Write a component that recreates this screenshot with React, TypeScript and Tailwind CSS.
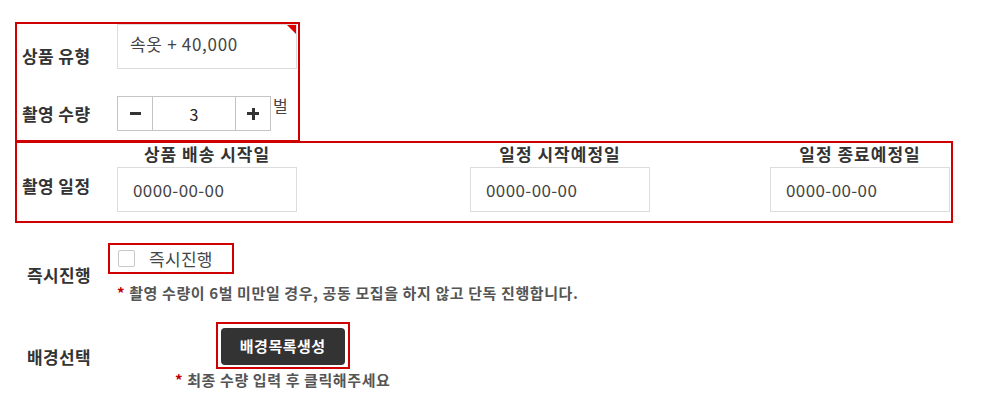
import { useState } from "react";

const FONT = "font-['Noto_Sans_CJK_KR','Noto_Sans',sans-serif]";
const LABEL = "text-[17px] font-bold text-[#333] leading-[22px] tracking-[0.4px] whitespace-nowrap";

const DateField = ({ title, className = "" }: { title: string; className?: string }) => (
  <div className={`flex flex-col items-center ${className}`}>
    <div className="h-[20px] leading-[20px] text-[17px] font-bold text-[#333] tracking-[1px] whitespace-nowrap">{title}</div>
    <div className="mt-[3px] w-[180px] h-[45px] border border-[#dcdcdc] flex items-center pl-[15px] text-[17px] text-[#444] tracking-[0.4px]">
      0000-00-00
    </div>
  </div>
);

export default function App() {
  const [qty, setQty] = useState(3);
  const [checked, setChecked] = useState(false);

  return (
    <div className={`w-[1000px] h-[400px] bg-white pl-[15px] pt-[22px] overflow-hidden ${FONT}`}>
      {/* 상품 유형 / 촬영 수량 */}
      <div className="w-[285px] h-[120px] border-2 border-[#d10000] pl-[5px]">
        <div className="flex">
          <div className={`w-[95px] pt-[21px] ${LABEL}`}>상품 유형</div>
          <div className="relative w-[180px] h-[45px] border border-[#dcdcdc] pl-[12px] pt-[7px] text-[17px] text-[#444] leading-[24px] tracking-[0.7px] whitespace-nowrap">
            속옷 + 40,000
            <div className="absolute top-0 right-0 w-0 h-0 border-t-[9px] border-l-[9px] border-t-[#e00000] border-l-transparent" />
          </div>
        </div>
        <div className="flex items-center mt-[27px]">
          <div className={`w-[95px] ${LABEL}`}>촬영 수량</div>
          <div className="flex h-[35px] border border-[#c4c4c4]">
            <button
              onClick={() => setQty((q) => Math.max(1, q - 1))}
              className="w-[35px] flex items-center justify-center border-r border-[#c4c4c4]"
            >
              <span className="block w-[11px] h-[3px] bg-[#333]" />
            </button>
            <div className="w-[82px] flex items-center justify-center text-[16px] text-[#222]">{qty}</div>
            <button
              onClick={() => setQty((q) => q + 1)}
              className="w-[35px] flex items-center justify-center border-l border-[#c4c4c4] relative"
            >
              <span className="absolute w-[12px] h-[3px] bg-[#333]" />
              <span className="absolute w-[3px] h-[12px] bg-[#333]" />
            </button>
          </div>
          <div className="self-start ml-[2px] -mt-[2px] text-[16px] text-[#444] leading-[22px]">벌</div>
        </div>
      </div>

      {/* 촬영 일정 */}
      <div className="-mt-px w-[938px] h-[82px] border-2 border-[#d10000] pl-[5px] pt-px flex">
        <div className={`w-[95px] pt-[31px] ${LABEL}`}>촬영 일정</div>
        <DateField title="상품 배송 시작일" />
        <DateField title="일정 시작예정일" className="ml-[173px]" />
        <DateField title="일정 종료예정일" className="ml-[120px]" />
      </div>

      {/* 즉시진행 */}
      <div className="flex items-center mt-[20px] pl-[12px]">
        <div className={`w-[81px] pt-[3px] ${LABEL}`}>즉시진행</div>
        <div className="flex flex-col">
          <label className="w-[126px] h-[31px] border-2 border-[#d10000] flex items-center pl-[8px] cursor-pointer">
            <span
              onClick={() => setChecked((c) => !c)}
              className={`w-[17px] h-[17px] border border-[#c8c8c8] rounded-[2px] ${checked ? "bg-[#333]" : "bg-white"}`}
            />
            <span className="ml-[14px] text-[17px] text-[#444] tracking-[0.3px]">즉시진행</span>
          </label>
          <div className="mt-[9px] ml-[9px] text-[15px] font-bold text-[#555] leading-[20px] tracking-[0.6px] whitespace-nowrap">
            <span className="text-[#c00000]">*</span> 촬영 수량이 6벌 미만일 경우, 공동 모집을 하지 않고 단독 진행합니다.
          </div>
        </div>
      </div>

      {/* 배경선택 */}
      <div className="flex items-center mt-[19px] pl-[12px]">
        <div className={`w-[148px] pt-[2px] ${LABEL}`}>배경선택</div>
        <div className="flex flex-col items-center">
          <div className="w-[134px] h-[47px] border-2 border-[#d10000] flex items-center justify-center">
            <button className="w-[124px] h-[37px] mt-[2px] rounded-[4px] bg-[#333] text-white text-[15px] font-bold tracking-[0.5px]">
              배경목록생성
            </button>
          </div>
          <div className="mt-[1px] text-[15px] font-bold text-[#555] leading-[20px] tracking-[0.6px] whitespace-nowrap">
            <span className="text-[#c00000]">*</span> 최종 수량 입력 후 클릭해주세요
          </div>
        </div>
      </div>
    </div>
  );
}
